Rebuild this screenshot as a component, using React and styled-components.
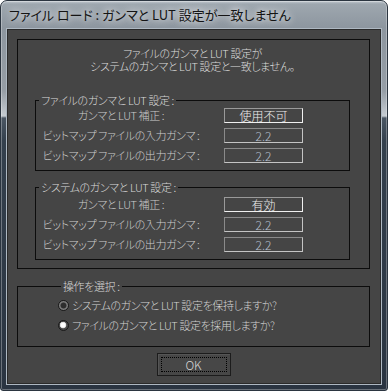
import React from "react";
import styled, { createGlobalStyle } from "styled-components";

const GlobalStyle = createGlobalStyle`
  html, body {
    margin: 0;
    padding: 0;
    background: #fff;
  }
  body {
    font-family: "Noto Sans CJK JP", "Noto Sans", sans-serif;
    font-feature-settings: "palt";
  }
`;

const Window = styled.div`
  box-sizing: border-box;
  width: 388px;
  height: 391px;
  display: flex;
  flex-direction: column;
  padding: 0 5px 5px;
  border: 1px solid #2b3540;
  border-radius: 7px 7px 3px 3px;
  background: linear-gradient(
    180deg,
    #c3cad1 0px,
    #9ea7af 3px,
    #8d969f 27px,
    #969ea6 90px,
    #c6ccd2 115px,
    #4a5663 117px,
    #34404d 140px,
    #2a3441 100%
  );
  box-shadow: inset 0 0 0 1px rgba(255, 255, 255, 0.3);
`;

const TitleBar = styled.div`
  height: 27px;
  display: flex;
  align-items: center;
  padding-left: 3px;
`;

const TitleText = styled.span`
  font-size: 13px;
  color: #141414;
  white-space: nowrap;
  text-shadow: 0 0 6px rgba(255, 255, 255, 0.9), 0 0 12px rgba(255, 255, 255, 0.6);
`;

const Client = styled.div`
  flex: 1;
  display: flex;
  flex-direction: column;
  border: 1px solid #aeb8c2;
  box-shadow: inset 0 0 0 1px #2a2a2a;
  background: #454545;
  padding: 10px 11px 0 10px;
  color: #d0d0d0;
  font-size: 11px;
  font-weight: 300;
  letter-spacing: -0.4px;
`;

const Panel = styled.div`
  display: flex;
  flex-direction: column;
  border: 1px solid #0c0c0c;
  padding: 7px 19px 8px 17px;
`;

const Message = styled.div`
  text-align: center;
  line-height: 13px;
  color: #dcdcdc;
  margin-bottom: 20px;
  white-space: nowrap;
`;

const Group = styled.fieldset`
  margin: ${(p) => p.$marginTop || 0}px 0 0;
  min-width: 0;
  border: 1px solid #0c0c0c;
  padding: ${(p) => p.$padTop}px 0 ${(p) => p.$padBottom}px ${(p) => p.$padLeft || 0}px;
  & + & {
    margin-top: 9px;
  }
`;

const Legend = styled.legend`
  margin-left: 3px;
  padding: 0 2px;
  line-height: 14px;
  color: #d8d8d8;
  white-space: nowrap;
`;

const Rows = styled.div`
  display: flex;
  flex-direction: column;
  gap: 5px;
`;

const Row = styled.div`
  display: grid;
  grid-template-columns: 170px 79px;
  column-gap: 18px;
  align-items: center;
  height: 15px;
`;

const Label = styled.span`
  text-align: center;
  line-height: 15px;
  white-space: nowrap;
  color: #cccccc;
`;

const ValueBox = styled.div`
  box-sizing: border-box;
  height: 15px;
  border: 1px solid;
  border-color: ${(p) =>
    p.$dim ? "#8a8a8a #c4c4c4 #c4c4c4 #8a8a8a" : "#9a9a9a #f0f0f0 #f0f0f0 #9a9a9a"};
  text-align: center;
  line-height: 13px;
  font-size: 12px;
  letter-spacing: 0;
  color: ${(p) => (p.$dim ? "#b8c0d0" : "#eeeeee")};
`;

const RadioRow = styled.label`
  display: flex;
  align-items: center;
  gap: 3px;
  height: 20px;
  white-space: nowrap;
  color: #d2d2d2;
`;

const RadioDot = styled.span`
  box-sizing: border-box;
  flex: none;
  width: 11px;
  height: 11px;
  border-radius: 50%;
  border: 1px solid #1a1a1a;
  background: ${(p) =>
    p.$checked
      ? "radial-gradient(circle at 45% 45%, #ffffff 0 2px, #cfcfcf 3px, #4a4a4a 3.6px 100%)"
      : "radial-gradient(circle, #2e2e2e 0 2.6px, #7c7c7c 3.4px 100%)"};
`;

const ButtonBar = styled.div`
  display: flex;
  justify-content: center;
  margin-top: 6px;
`;

const Button = styled.button`
  box-sizing: border-box;
  width: 74px;
  height: 23px;
  border: 1px solid #1c1c1c;
  box-shadow: inset 1px 1px 0 #555;
  background: #474747;
  color: #d8d8d8;
  font-family: inherit;
  font-size: 12px;
  font-weight: 300;
  outline: 1px dotted #000;
  outline-offset: -5px;
  padding: 0;
`;

const settings = {
  file: { correction: "使用不可", input: "2.2", output: "2.2" },
  system: { correction: "有効", input: "2.2", output: "2.2" },
};

const SettingsGroup = ({ title, values, padTop }) => (
  <Group $padTop={padTop} $padBottom={7}>
    <Legend>{title}</Legend>
    <Rows>
      <Row>
        <Label>ガンマと LUT 補正 :</Label>
        <ValueBox>{values.correction}</ValueBox>
      </Row>
      <Row>
        <Label>ビットマップ ファイルの入力ガンマ :</Label>
        <ValueBox $dim>{values.input}</ValueBox>
      </Row>
      <Row>
        <Label>ビットマップ ファイルの出力ガンマ :</Label>
        <ValueBox $dim>{values.output}</ValueBox>
      </Row>
    </Rows>
  </Group>
);

export default function App() {
  return (
    <>
      <GlobalStyle />
      <Window>
        <TitleBar>
          <TitleText>ファイル ロード : ガンマと LUT 設定が一致しません</TitleText>
        </TitleBar>
        <Client>
          <Panel>
            <Message>
              ファイルのガンマと LUT 設定が
              <br />
              システムのガンマと LUT 設定と一致しません。
            </Message>
            <SettingsGroup title="ファイルのガンマと LUT 設定 :" values={settings.file} padTop={1} />
            <SettingsGroup title="システムのガンマと LUT 設定 :" values={settings.system} padTop={3} />
          </Panel>
          <Group $marginTop={10} $padTop={2} $padBottom={11} $padLeft={40}>
            <Legend>操作を選択 :</Legend>
            <RadioRow>
              <RadioDot />
              システムのガンマと LUT 設定を保持しますか?
            </RadioRow>
            <RadioRow>
              <RadioDot $checked />
              ファイルのガンマと LUT 設定を採用しますか?
            </RadioRow>
          </Group>
          <ButtonBar>
            <Button>OK</Button>
          </ButtonBar>
        </Client>
      </Window>
    </>
  );
}
